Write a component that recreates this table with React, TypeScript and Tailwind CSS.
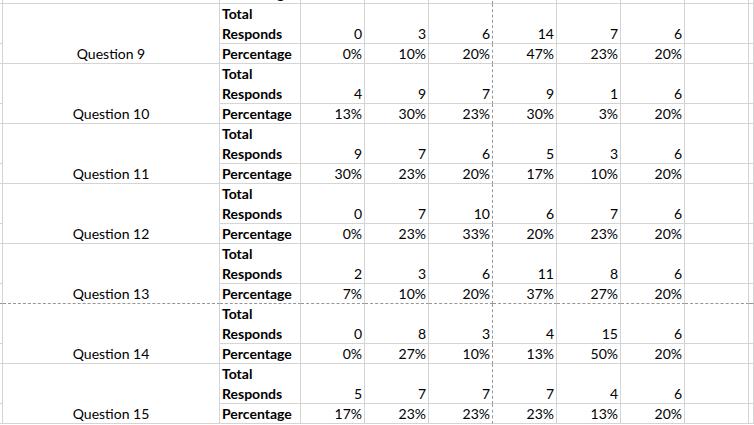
import React from "react";

type Group = { q: string; counts: number[]; pct: string[] };

const groups: Group[] = [
  { q: "Question 9", counts: [0, 3, 6, 14, 7, 6], pct: ["0%", "10%", "20%", "47%", "23%", "20%"] },
  { q: "Question 10", counts: [4, 9, 7, 9, 1, 6], pct: ["13%", "30%", "23%", "30%", "3%", "20%"] },
  { q: "Question 11", counts: [9, 7, 6, 5, 3, 6], pct: ["30%", "23%", "20%", "17%", "10%", "20%"] },
  { q: "Question 12", counts: [0, 7, 10, 6, 7, 6], pct: ["0%", "23%", "33%", "20%", "23%", "20%"] },
  { q: "Question 13", counts: [2, 3, 6, 11, 8, 6], pct: ["7%", "10%", "20%", "37%", "27%", "20%"] },
  { q: "Question 14", counts: [0, 8, 3, 4, 15, 6], pct: ["0%", "27%", "10%", "13%", "50%", "20%"] },
  { q: "Question 15", counts: [5, 7, 7, 7, 4, 6], pct: ["17%", "23%", "23%", "23%", "13%", "20%"] },
];

// page break sits on the right edge of the third value column, and under Question 13
const BREAK_COL = 2;
const BREAK_ROW = "Question 13";

const cell = "border-r border-b border-[#d4d4d4] flex items-end leading-[18px] whitespace-nowrap overflow-hidden";
const vDash = "[border-right-style:dashed] border-r-[#969696]";
const hDash = "[border-bottom-style:dashed] border-b-[#969696]";

function ValueCells({ values, h, dashed }: { values: (string | number)[]; h: string; dashed: boolean }) {
  return (
    <>
      {values.map((v, i) => (
        <div
          key={i}
          className={`${cell} ${h} justify-end pr-[2px] ${i === BREAK_COL ? vDash : ""} ${dashed ? hDash : ""}`}
        >
          {v}
        </div>
      ))}
      <div className={`${cell} ${h} ${dashed ? hDash : ""}`} />
      <div className={`${cell} ${h} ${dashed ? hDash : ""}`} />
    </>
  );
}

export default function App() {
  return (
    <div className="w-[754px] h-[425px] overflow-hidden bg-white text-black font-['Lato','Liberation_Sans',sans-serif] text-[14px]">
      <div className="mt-[-16px] grid grid-cols-[3px_217px_81px_64px_64px_64px_64px_64px_64px_64px_1fr]">
        {/* tail of the row above */}
        <div className={`${cell} h-[20px]`} />
        <div className={`${cell} h-[20px]`} />
        <div className={`${cell} h-[20px] font-bold pl-[2px]`}>Percentage</div>
        <ValueCells values={["", "", "", "", "", ""]} h="h-[20px]" dashed={false} />

        {groups.map((g) => {
          const dashed = g.q === BREAK_ROW;
          return (
            <React.Fragment key={g.q}>
              <div className={`${cell} h-[40px]`} />
              <div className={`${cell} row-span-2 justify-center ${dashed ? hDash : ""}`}>{g.q}</div>
              <div className={`${cell} h-[40px] flex-col items-start justify-end gap-[2px] font-bold pl-[2px]`}>
                <div>Total</div>
                <div>Responds</div>
              </div>
              <ValueCells values={g.counts} h="h-[40px]" dashed={false} />

              <div className={`${cell} h-[20px] ${dashed ? hDash : ""}`} />
              <div className={`${cell} h-[20px] font-bold pl-[2px] ${dashed ? hDash : ""}`}>Percentage</div>
              <ValueCells values={g.pct} h="h-[20px]" dashed={dashed} />
            </React.Fragment>
          );
        })}
      </div>
    </div>
  );
}
